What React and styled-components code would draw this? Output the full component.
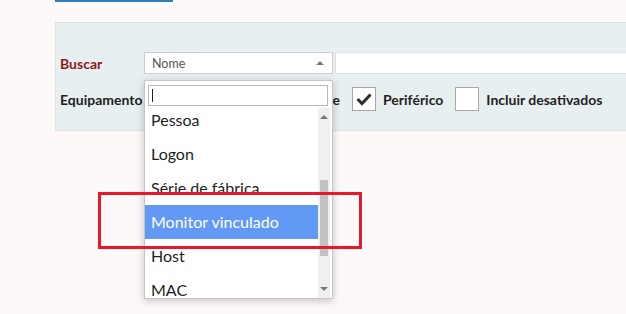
import React from 'react';
import styled, { createGlobalStyle } from 'styled-components';

const GlobalStyle = createGlobalStyle`
  html, body {
    margin: 0;
    background: #fdf9f8;
    font-family: Lato, "Noto Sans", sans-serif;
  }
`;

const Page = styled.div`
  position: relative;
  width: 626px;
  height: 314px;
  overflow: hidden;
  padding-left: 55px;
  box-sizing: border-box;
`;

const TopTab = styled.div`
  width: 118px;
  height: 2px;
  background: #2f7fbe;
`;

const Panel = styled.div`
  margin-top: 20px;
  height: 109px;
  box-sizing: border-box;
  background: #e8eff1;
  border: 1px solid #dbe2e4;
  border-right: none;
  padding: 29px 0 0 4px;
`;

const Row = styled.div`
  display: flex;
  align-items: center;
  height: ${p => p.$h}px;
  margin-top: ${p => p.$mt || 0}px;
`;

const Label = styled.div`
  width: 84px;
  flex: none;
  font-size: 14px;
  font-weight: 700;
  color: ${p => (p.$accent ? '#8c1c1c' : '#222')};
`;

const SelectWrap = styled.div`
  position: relative;
  width: 189px;
  height: 22px;
  flex: none;
`;

const SelectBox = styled.div`
  height: 100%;
  box-sizing: border-box;
  background: #fff;
  border: 1px solid #c9cfd1;
  display: flex;
  align-items: center;
  justify-content: space-between;
  padding: 0 8px 0 7px;
  font-size: 12.5px;
  color: #555;
`;

const Arrow = styled.span`
  width: 0;
  height: 0;
  border-left: 4px solid transparent;
  border-right: 4px solid transparent;
  border-${p => (p.$down ? 'top' : 'bottom')}: 4px solid #777;
`;

const TextInput = styled.div`
  flex: 1;
  height: 22px;
  margin-left: 2px;
  background: #fff;
  border: 1px solid #dde3e5;
  border-right: none;
  box-sizing: border-box;
`;

const Dropdown = styled.div`
  position: absolute;
  left: 0;
  top: 28px;
  width: 189px;
  height: 219px;
  box-sizing: border-box;
  background: #fff;
  border: 1px solid #c6c6c6;
  box-shadow: 0 2px 8px rgba(0, 0, 0, 0.22);
  z-index: 5;
  display: flex;
  flex-direction: column;
`;

const Search = styled.div`
  margin: 4px 4px 0 3px;
  height: 21px;
  box-sizing: border-box;
  border: 1px solid #b9b9b9;
  display: flex;
  align-items: center;
  padding-left: 3px;
`;

const Caret = styled.span`
  width: 1px;
  height: 13px;
  background: #222;
`;

const ListArea = styled.div`
  display: flex;
  margin-top: 2px;
  flex: 1;
  min-height: 0;
`;

const List = styled.div`
  flex: 1;
  overflow: hidden;
`;

const Items = styled.div`
  margin-top: ${p => -p.$scroll}px;
`;

const Item = styled.div`
  height: 34px;
  line-height: 34px;
  padding-left: 6px;
  font-size: 16px;
  white-space: nowrap;
  color: ${p => (p.$active ? '#fff' : '#1e1e1e')};
  background: ${p => (p.$active ? '#6299f5' : 'transparent')};
`;

const Scrollbar = styled.div`
  width: 12px;
  margin-right: 2px;
  background: #f0f0f0;
  display: flex;
  flex-direction: column;
  align-items: center;
`;

const ScrollBtn = styled.div`
  height: 18px;
  display: flex;
  align-items: center;
  justify-content: center;
`;

const Track = styled.div`
  flex: 1;
  width: 100%;
  display: flex;
  justify-content: center;
`;

const Thumb = styled.div`
  width: 8px;
  height: 76px;
  margin-top: ${p => p.$top}px;
  background: #c2c2c2;
`;

const CheckItem = styled.label`
  flex: none;
  display: flex;
  align-items: center;
  justify-content: space-between;
  gap: 7px;
  width: ${p => (p.$w ? `${p.$w}px` : 'auto')};
  margin-right: 12px;
  font-size: 14px;
  font-weight: 700;
  color: #222;
  white-space: nowrap;
`;

const Box = styled.span`
  width: 24px;
  height: 24px;
  flex: none;
  box-sizing: border-box;
  background: #fff;
  border: 1px solid #a8a8a8;
  display: flex;
  align-items: center;
  justify-content: center;
`;

const Highlight = styled.div`
  position: absolute;
  left: 98px;
  top: 192px;
  width: 264px;
  height: 57px;
  box-sizing: border-box;
  border: 3px solid #e8172a;
  z-index: 10;
`;

const options = ['Pessoa', 'Logon', 'Série de fábrica', 'Monitor vinculado', 'Host', 'MAC'];

function Check({ checked, width, children }) {
  return (
    <CheckItem $w={width}>
      <Box>
        {checked && (
          <svg width="16" height="14" viewBox="0 0 16 14">
            <path d="M1.5 7 L6 11.5 L14.5 2.5" fill="none" stroke="#2e2e2e" strokeWidth="3" />
          </svg>
        )}
      </Box>
      {children}
    </CheckItem>
  );
}

export default function App() {
  return (
    <Page>
      <GlobalStyle />
      <TopTab />
      <Panel>
        <Row $h={22}>
          <Label $accent>Buscar</Label>
          <SelectWrap>
            <SelectBox>
              Nome
              <Arrow />
            </SelectBox>
            <Dropdown>
              <Search>
                <Caret />
              </Search>
              <ListArea>
                <List>
                  <Items $scroll={5}>
                    {options.map(o => (
                      <Item key={o} $active={o === 'Monitor vinculado'}>{o}</Item>
                    ))}
                  </Items>
                </List>
                <Scrollbar>
                  <ScrollBtn><Arrow /></ScrollBtn>
                  <Track><Thumb $top={54} /></Track>
                  <ScrollBtn><Arrow $down /></ScrollBtn>
                </Scrollbar>
              </ListArea>
            </Dropdown>
          </SelectWrap>
          <TextInput />
        </Row>
        <Row $h={24} $mt={13}>
          <Label>Equipamento</Label>
          <Check width={196}>Rede</Check>
          <Check checked>Periférico</Check>
          <Check>Incluir desativados</Check>
        </Row>
      </Panel>
      <Highlight />
    </Page>
  );
}
